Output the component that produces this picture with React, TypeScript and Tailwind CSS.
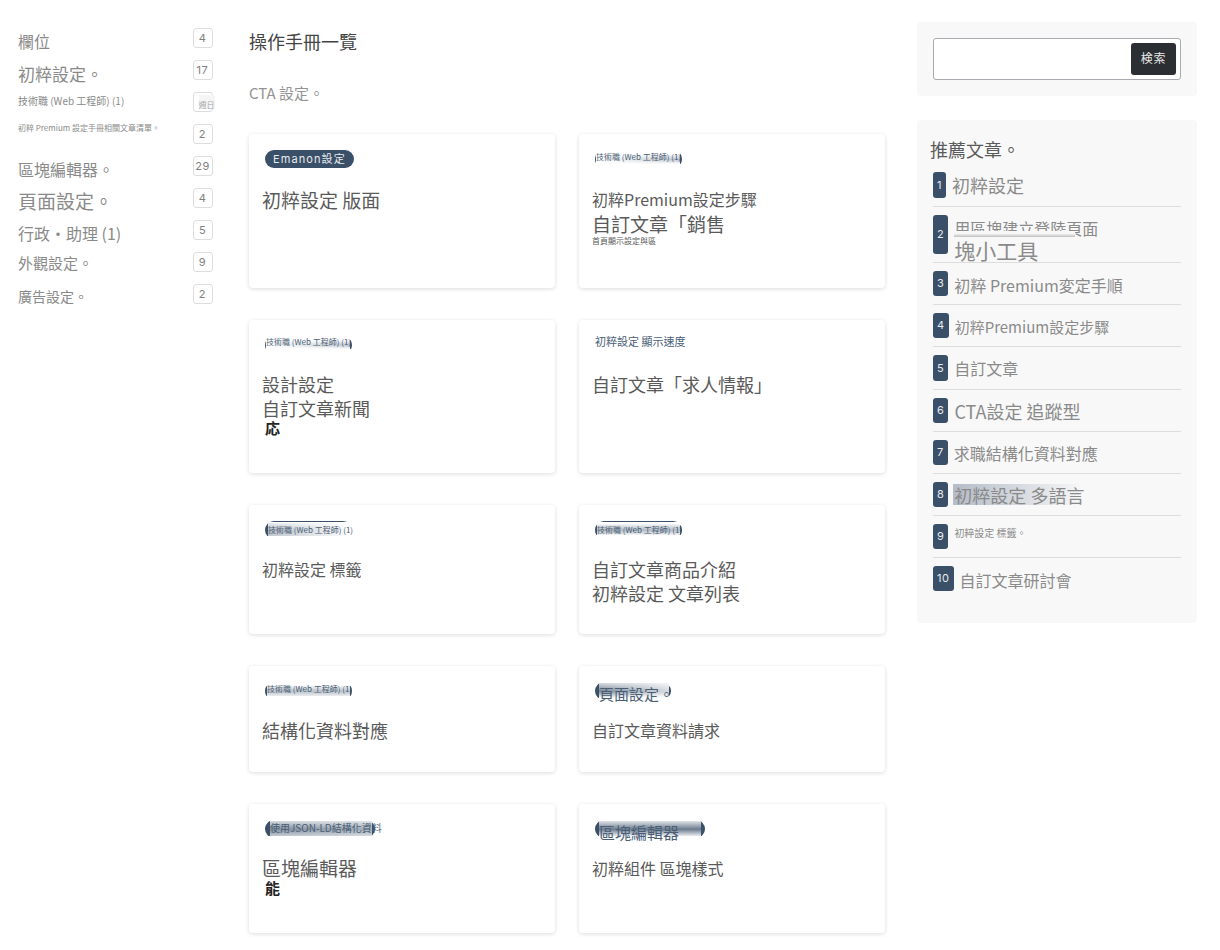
import clsx from "clsx";

type Smear = {
  width: number;
  // visible slice of the pill
  top: number;
  bottom: number;
  left: number;
  right: number;
  topLine?: boolean;
  // opacity of the tint: upper, middle, lower edge
  tint: [number, number, number];
  // how much of the tint survives at the left and right end
  fade: [number, number];
};

type Line = { text: string; className: string };

type Card = {
  id: string;
  tag: string;
  tagClass: string;
  smear?: Smear;
  solid?: boolean;
  lines: Line[];
};

const categories = [
  { name: "欄位", count: "4", className: "text-base leading-[26px]" },
  { name: "初粹設定。", count: "17", className: "text-[17px] leading-7" },
  { name: "技術職 (Web 工程師) (1)", count: "週日", className: "text-[10px] leading-[18px]", blurred: true },
  { name: "初粹 Premium 設定手冊相關文章清單。", count: "2", className: "text-[8px] leading-2" },
  { name: "區塊編輯器。", count: "29", className: "text-base leading-[26px]" },
  { name: "頁面設定。", count: "4", className: "text-[19px] leading-[26px]" },
  { name: "行政・助理 (1)", count: "5", className: "text-base leading-[26px]" },
  { name: "外觀設定。", count: "9", className: "text-[15px] leading-[22px]" },
  { name: "廣告設定。", count: "2", className: "text-sm leading-6" },
];

const cards: Card[] = [
  {
    id: "layout",
    tag: "Emanon設定",
    tagClass: "px-2 text-[11px] leading-[18px] tracking-widest",
    solid: true,
    lines: [{ text: "初粹設定 版面", className: "text-[19px] leading-7" }],
  },
  {
    id: "sales",
    tag: "技術職 (Web 工程師) (1)",
    tagClass: "pl-px text-[8px] leading-[14px]",
    smear: { width: 87, top: 4, bottom: 14, left: 1, right: 2, tint: [0, 0.35, 0], fade: [0, 1] },
    lines: [
      { text: "初粹Premium設定步驟", className: "text-base leading-[26px]" },
      { text: "自訂文章「銷售", className: "text-[19px] leading-6" },
      { text: "首頁顯示設定與區", className: "text-[8px] leading-[10px]" },
    ],
  },
  {
    id: "news",
    tag: "技術職 (Web 工程師) (1)",
    tagClass: "pl-px text-[8px] leading-3",
    smear: { width: 87, top: 4, bottom: 13, left: 1, right: 2, tint: [0, 0.35, 0], fade: [0, 1] },
    lines: [
      { text: "設計設定", className: "text-lg leading-6" },
      { text: "自訂文章新聞", className: "text-lg leading-6" },
      { text: "応", className: "pl-[3px] text-[15px] leading-4 font-bold text-[#222]" },
    ],
  },
  {
    id: "jobs",
    tag: "初粹設定 顯示速度",
    tagClass: "text-[11px] leading-[10px]",
    lines: [{ text: "自訂文章「求人情報」", className: "text-lg leading-6" }],
  },
  {
    id: "tags",
    tag: "技術職 (Web 工程師) (1)",
    tagClass: "pl-[3px] text-[8px] leading-[18px]",
    smear: { width: 87, top: 2, bottom: 15, left: 3, right: 0, topLine: true, tint: [0.1, 0.4, 0.3], fade: [1, 0] },
    lines: [{ text: "初粹設定 標籤", className: "text-base leading-6" }],
  },
  {
    id: "products",
    tag: "技術職 (Web 工程師) (1)",
    tagClass: "pl-0.5 text-[8px] leading-[18px]",
    smear: { width: 87, top: 3, bottom: 14, left: 2, right: 2, topLine: true, tint: [0.05, 0.4, 0.05], fade: [1, 1] },
    lines: [
      { text: "自訂文章商品介紹", className: "text-lg leading-6" },
      { text: "初粹設定 文章列表", className: "text-lg leading-6" },
    ],
  },
  {
    id: "structured",
    tag: "技術職 (Web 工程師) (1)",
    tagClass: "pl-0.5 text-[8px] leading-[14px]",
    smear: { width: 87, top: 3, bottom: 14, left: 2, right: 2, tint: [0, 0.35, 0.1], fade: [1, 1] },
    lines: [{ text: "結構化資料對應", className: "text-lg leading-6" }],
  },
  {
    id: "request",
    tag: "頁面設定。",
    tagClass: "pl-1 text-[15px] leading-6",
    smear: { width: 76, top: 1, bottom: 16, left: 4, right: 2, tint: [0.2, 0.7, 0], fade: [1, 0.3] },
    lines: [{ text: "自訂文章資料請求", className: "text-base leading-6" }],
  },
  {
    id: "blocks",
    tag: "使用JSON-LD結構化資料",
    tagClass: "pl-[5px] text-[10px] leading-4",
    smear: { width: 110, top: 1, bottom: 16, left: 5, right: 3, tint: [0.2, 0.65, 0.3], fade: [1, 0.7] },
    lines: [
      { text: "區塊編輯器", className: "text-[19px] leading-6" },
      { text: "能", className: "pl-[3px] text-[15px] leading-4 font-bold text-[#222]" },
    ],
  },
  {
    id: "styles",
    tag: "區塊編輯器",
    tagClass: "pl-1 text-base leading-6",
    smear: { width: 110, top: 1, bottom: 16, left: 4, right: 4, tint: [0.15, 0.75, 0.1], fade: [1, 1] },
    lines: [{ text: "初粹組件 區塊樣式", className: "text-base leading-6" }],
  },
];

const rowHeights = ["min-h-[154px]", "min-h-[153px]", "min-h-[129px]", "min-h-[106px]", "min-h-[129px]"];

const ranking = [
  { title: "初粹設定", className: "text-lg leading-[26px]", height: "h-[26px]" },
  { title: "用區塊建立登陸頁面", second: "塊小工具", className: "text-base leading-[26px]", height: "h-[39px]" },
  { title: "初粹 Premium変定手順", className: "text-base leading-7", height: "h-[25px]" },
  { title: "初粹Premium設定步驟", className: "text-[15px] leading-7", height: "h-[25px]" },
  { title: "自訂文章", className: "text-base leading-[26px]", height: "h-[26px]" },
  { title: "CTA設定 追蹤型", className: "text-lg leading-[26px]", height: "h-[25px]" },
  { title: "求職結構化資料對應", className: "text-base leading-[26px]", height: "h-[25px]" },
  { title: "初粹設定 多語言", className: "text-lg leading-[26px]", height: "h-[25px]", marked: true },
  { title: "初粹設定 標籤。", className: "text-[10px] leading-[18px]", height: "h-[25px]" },
  { title: "自訂文章研討會", className: "text-base leading-7", height: "h-[25px]" },
];

export default function App() {
  return (
    <div className="flex items-start bg-white pr-[23px] pl-4 font-['Inter','Noto_Sans_CJK_TC',sans-serif]">
      <CategoryNav />
      <main className="ml-9 min-w-0 flex-1 pb-4 font-['Noto_Sans_CJK_TC',sans-serif]">
        <h1 className="pt-7 text-lg leading-[26px] text-[#444]">操作手冊一覽</h1>
        <p className="pt-[26px] text-[15px] leading-[26px] text-[#939393]">CTA 設定。</p>
        <div className="mt-7 grid grid-cols-2 gap-x-6 gap-y-8">
          {cards.map((card, index) => (
            <ManualCard key={card.id} card={card} height={rowHeights[Math.floor(index / 2)]} />
          ))}
        </div>
      </main>
      <aside className="ml-8 w-[280px] shrink-0 pt-[22px]">
        <SearchBox />
        <Ranking />
      </aside>
    </div>
  );
}

function CategoryNav() {
  return (
    <nav className="w-[197px] shrink-0 pt-7">
      <ul className="space-y-3">
        {categories.map((item) => (
          <li key={item.name} className="flex h-5 items-start justify-between">
            <a
              href="#"
              className={clsx(
                "whitespace-nowrap pl-0.5 font-['Noto_Sans_CJK_TC',sans-serif] text-[#8a8a8a]",
                item.className,
              )}
            >
              {item.name}
            </a>
            <span className="flex size-5 shrink-0 items-center justify-center rounded-[3px] border border-[#ddd] pr-px text-[11px] leading-none tracking-wider text-[#808080]">
              {item.blurred ? (
                <span className="ml-2 bg-[#f5f5f5] pt-1.5 font-['Noto_Sans_CJK_TC',sans-serif] text-[8px] tracking-normal whitespace-nowrap text-[#aaa]">
                  {item.count}
                </span>
              ) : (
                item.count
              )}
            </span>
          </li>
        ))}
      </ul>
    </nav>
  );
}

function ManualCard({ card, height }: { card: Card; height: string }) {
  return (
    <article className={clsx("rounded-sm bg-white px-4 pt-4 shadow-[0_1px_4px_rgba(0,0,0,0.14)]", height)}>
      <div className="flex h-[18px] items-start">
        <a
          href="#"
          className={clsx(
            "relative whitespace-nowrap",
            card.solid
              ? "rounded-full bg-[#3a4f68] font-['Inter','Noto_Sans_CJK_TC',sans-serif] text-[#e8ebef]"
              : "text-[#4a5e76]",
            card.tagClass,
          )}
        >
          {card.smear && <PillSmear id={card.id} smear={card.smear} />}
          <span className="relative">{card.tag}</span>
        </a>
      </div>
      <h2 className="mt-[18px] -ml-[3px] font-normal">
        <a href="#" className="block text-[#5a5a5a]">
          {card.lines.map((line) => (
            <span key={line.text} className={clsx("block", line.className)}>
              {line.text}
            </span>
          ))}
        </a>
      </h2>
    </article>
  );
}

function PillSmear({ id, smear }: { id: string; smear: Smear }) {
  const { width, top, bottom, left, right, tint, fade } = smear;
  const inner = width - left - right;
  return (
    <svg className="absolute top-0 left-0" width={width} height="18" viewBox={`0 0 ${width} 18`} aria-hidden="true">
      <defs>
        <clipPath id={`${id}-caps`}>
          <rect x="0" y={top} width={left} height={bottom - top} />
          <rect x={width - right} y={top} width={right} height={bottom - top} />
          {smear.topLine && <rect x="0" y="0" width={width} height="1" />}
        </clipPath>
        <linearGradient id={`${id}-tint`} x1="0" y1="0" x2="0" y2="1">
          <stop offset="0" stopColor="#3a4f68" stopOpacity={tint[0]} />
          <stop offset="0.55" stopColor="#3a4f68" stopOpacity={tint[1]} />
          <stop offset="1" stopColor="#3a4f68" stopOpacity={tint[2]} />
        </linearGradient>
        <linearGradient id={`${id}-fade`}>
          <stop offset="0" stopColor="#fff" stopOpacity={1 - fade[0]} />
          <stop offset="1" stopColor="#fff" stopOpacity={1 - fade[1]} />
        </linearGradient>
      </defs>
      <rect width={width} height="18" rx="9" fill="#3a4f68" clipPath={`url(#${id}-caps)`} />
      <rect x={left} y={top} width={inner} height={bottom - top} fill={`url(#${id}-tint)`} />
      <rect x={left} y={top} width={inner} height={bottom - top} fill={`url(#${id}-fade)`} />
    </svg>
  );
}

function SearchBox() {
  return (
    <form className="rounded-sm bg-[#f8f8f8] p-4" onSubmit={(event) => event.preventDefault()}>
      <div className="flex h-[42px] items-center rounded-[3px] border border-[#aaabb0] bg-white p-1">
        <input type="search" aria-label="検索" className="h-full min-w-0 flex-1 px-2 text-sm outline-none" />
        <button
          type="submit"
          className="h-8 rounded-[3px] bg-[#2b2e33] px-2.5 font-['Inter','Noto_Sans_CJK_JP',sans-serif] text-[12px] tracking-wider text-[#e8e8e8]"
        >
          検索
        </button>
      </div>
    </form>
  );
}

function Ranking() {
  return (
    <section className="mt-6 rounded-sm bg-[#f8f8f8] px-4 pt-4 pb-6">
      <h2 className="mb-0.5 -ml-[3px] font-['Noto_Sans_CJK_TC',sans-serif] text-lg leading-[26px] text-[#5a5a5a]">
        推薦文章。
      </h2>
      <ol className="divide-y divide-[#ddd]">
        {ranking.map((item, index) => (
          <li key={item.title} className="flex items-start gap-1.5 py-2">
            <span
              className={clsx(
                "flex items-center rounded-[3px] bg-[#3a4f68] px-1 text-[11px] leading-none tracking-wider text-[#e8ebef]",
                item.height,
              )}
            >
              {index + 1}
            </span>
            <a
              href="#"
              className={clsx(
                "relative font-['Noto_Sans_CJK_TC',sans-serif] whitespace-nowrap text-[#8a8a8a]",
                item.height,
                item.className,
              )}
            >
              {item.marked && (
                <span className="absolute top-0.5 -left-px h-[21px] w-full bg-linear-to-r from-[#b4bcc8] to-[#f8f8f8]" />
              )}
              <span className="relative">{item.title}</span>
              {item.second && (
                <>
                  <span className="absolute top-4 left-0 h-[6px] w-[121px] bg-linear-to-b from-[#f8f8f8] from-40% to-[#c0c0c0]" />
                  <span className="relative block text-[21px] leading-[18px]">{item.second}</span>
                </>
              )}
            </a>
          </li>
        ))}
      </ol>
    </section>
  );
}
